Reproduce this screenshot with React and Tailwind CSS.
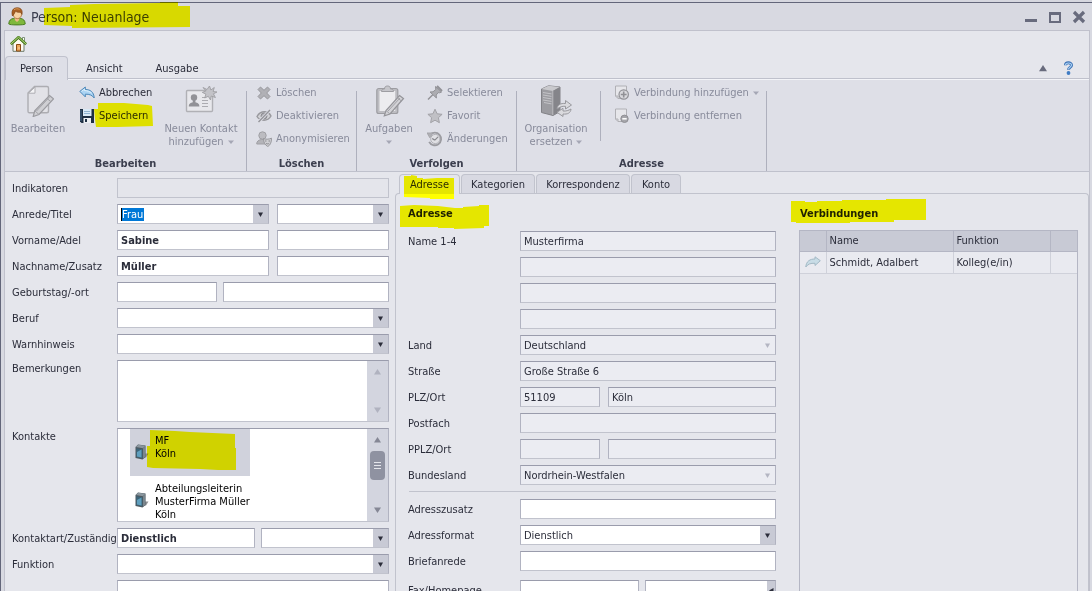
import React from "react";

const DISABLED = "text-[#888b9b]";

/* ---------- shared pieces ---------- */

function Marker({ className, w, h, points }) {
  return (
    <svg
      aria-hidden="true"
      className={"pointer-events-none absolute mix-blend-multiply " + className}
      width={w}
      height={h}
      viewBox={`0 0 ${w} ${h}`}
    >
      <polygon points={points} fill="#ffff00" />
    </svg>
  );
}

function Caret({ color = "#2b2d3a", w = 5, h = 5 }) {
  return (
    <svg width={w} height={h} viewBox="0 0 10 10" preserveAspectRatio="none" aria-hidden="true">
      <path d="M0 1h10L5 10z" fill={color} />
    </svg>
  );
}

const EDGE = "border border-[#b1b3c1] border-t-[#9a9cac] border-b-[#c1c3cd]";

function Field({ id, label, value = "", bold, readOnly, className = "flex-1" }) {
  return (
    <input
      id={id}
      aria-label={label}
      defaultValue={value}
      readOnly={readOnly}
      className={`h-5 min-w-0 px-[3px] leading-none outline-none ${EDGE} ${
        readOnly ? "bg-[#ebecf2]" : "bg-white"
      } ${bold ? "font-bold" : ""} ${className}`}
    />
  );
}

function Combo({ id, label, value = "", disabled, selected, className = "flex-1" }) {
  return (
    <div className={`flex h-5 min-w-0 items-stretch ${EDGE} ${disabled ? "bg-[#ebecf2]" : "bg-white"} ${className}`}>
      <div className="relative flex min-w-0 flex-1 items-center">
        <select
          id={id}
          aria-label={label}
          defaultValue={value}
          className={
            selected
              ? "ml-[3px] h-[13px] appearance-none border-l border-black bg-[#0078d7] pr-px leading-[13px] text-white outline-none [field-sizing:content]"
              : "h-full w-full appearance-none bg-transparent px-[3px] outline-none"
          }
        >
          <option value={value}>{value}</option>
        </select>
      </div>
      <span
        className={`flex w-[15px] items-center justify-center ${disabled ? "" : "bg-[#c8cad5]"}`}
      >
        <Caret color={disabled ? "#b3b5c2" : "#2b2d3a"} />
      </span>
    </div>
  );
}

function Row({ id, label, children, wide, tall }) {
  return (
    <div className="flex items-start">
      <label
        htmlFor={id}
        className={`shrink-0 whitespace-nowrap leading-[13px] ${tall ? "pt-0.5" : "pt-1"} ${
          wide ? "w-28" : "w-[105px]"
        }`}
      >
        {label}
      </label>
      <div className="flex min-w-0 flex-1">{children}</div>
    </div>
  );
}

/* ---------- icons ---------- */

const UserIcon = () => (
  <svg width="18" height="19" viewBox="0 0 18 19" aria-hidden="true">
    <path d="M.8 17c0-3.500 2-5.300 5-5.600l3.200 1.400 3.200-1.400c3 .3 5 2.100 5 5.600 0 1.200-16.400 1.200-16.400 0z" fill="#7fb83c" stroke="#4b7d20" />
    <path d="M6.500 10.500h5l-.3 2.600L9 15l-2.200-1.900z" fill="#eeb986" />
    <circle cx="9.400" cy="7.400" r="4.200" fill="#f7d2a4" stroke="#a96b35" strokeWidth=".8" />
    <path d="M4.500 9C3 4 5 .8 9 .8S14.800 3 14 7.400l-1.400-2.200C10 5.600 8.500 5 7.500 4 7 6 6 7 4.500 9z" fill="#a95f23" stroke="#7e4316" strokeWidth=".7" />
    <path d="M6 2.800c1.500-1.200 4-1.400 5.500-.3" stroke="#d89a55" fill="none" />
  </svg>
);

const HomeIcon = () => (
  <svg width="17" height="16" viewBox="0 0 17 16" aria-hidden="true">
    <path d="M3 7.500v7.800h11V7.500L8.500 2.500z" fill="#fdfaf0" stroke="#6d7a6a" />
    <path d="M12.500 1.500h2v4h-2z" fill="#fff" stroke="#627a5a" strokeWidth=".8" />
    <path d="M.8 8.200L8.500 1.200l7.700 7" fill="none" stroke="#4d7d1f" strokeWidth="2.600" />
    <path d="M1.200 7.800L8.500 1.200l7.300 6.600" fill="none" stroke="#b5dd80" strokeWidth="1" />
    <path d="M6.500 15V8.500h4V15z" fill="#eda75a" stroke="#8b4a14" />
    <path d="M9 11.500v1" stroke="#fff" />
  </svg>
);

const EditIcon = () => (
  <svg width="32" height="32" viewBox="0 0 32 32" aria-hidden="true">
    <path d="M12.500 1.500H25c1 0 1.500.5 1.500 1.500v23c0 1.200-.6 1.800-1.800 1.800H7.500c-1 0-1.500-.6-1.500-1.600V8z" fill="#e2e2e7" stroke="#adadb2" strokeWidth="1.400" />
    <path d="M13 2v6.200H6.500z" fill="#f4f4f6" stroke="#adadb2" />
    <path d="M27.500 10.500l4 3.300L17 29.500l-5.800 2 1.500-5.600z" fill="#cfcfd3" stroke="#9b9ba0" strokeWidth="1.200" />
    <path d="M25 13.500l4 3.200M14.500 26l13-14M13 26l4 3.500" stroke="#a3a3a8" fill="none" />
  </svg>
);

const UndoIcon = () => (
  <svg width="16" height="14" viewBox="0 0 16 14" aria-hidden="true">
    <path d="M.8 5.400L6.300 1v2.500c5 0 8.500 2.300 8.900 8.500-2-2.800-4.700-4-8.900-3.800v2.700z" fill="#a9d3f3" stroke="#4d88b8" strokeLinejoin="round" />
    <path d="M2.500 5.400l3-2.300v1.500c3 0 5.500 1 7 2.600" fill="none" stroke="#e1f2fd" />
  </svg>
);

const SaveIcon = () => (
  <svg width="14" height="14" viewBox="0 0 14 14" aria-hidden="true">
    <path d="M0 0h14v14H1.500L0 12.500z" fill="#1e3044" />
    <path d="M3 0h8.500v7H3z" fill="#d9e9f6" />
    <path d="M4 2.500h6M4 4.500h6" stroke="#8fb4d2" />
    <path d="M3.500 9h7.500v5H3.500z" fill="#eceff3" />
    <path d="M5 10h2v3H5z" fill="#1e3044" />
    <path d="M1 1v11" stroke="#4b6d8c" />
  </svg>
);

const ContactIcon = () => (
  <svg width="32" height="32" viewBox="0 0 32 32" aria-hidden="true">
    <rect x="1.500" y="5.500" width="26" height="21" rx="1" fill="#e8e8ec" stroke="#b0b0b5" strokeWidth="1.400" />
    <circle cx="9" cy="12.500" r="3.200" fill="#929297" />
    <path d="M3.800 21.500c0-3 2-3.600 4-4.200V15h2.600v2.300c2 .6 4 1.200 4 4.200z" fill="#929297" />
    <path d="M17 12.500h3M17 15.500h6M17 18.500h6M17 21.500h6" stroke="#acacb1" />
    <path d="M24.500 1l1.400 4 3.400-2.500-1.200 4L32 7l-3.600 1.800 2 3.700-4.200-1.500-.7 4-2.200-3.700-3.600 1.700 1.200-3.900-3.600-1.700 3.800-1.500L18 2.500l4 2z" fill="#c3c3c8" stroke="#9e9ea3" strokeWidth=".9" />
  </svg>
);

const CrossIcon = () => (
  <svg width="16" height="16" viewBox="0 0 16 16" aria-hidden="true">
    <path d="M4.500 2L8 5.300 11.500 2 14 4.500 10.700 8l3.300 3.500-2.500 2.500L8 10.700 4.500 14 2 11.500 5.300 8 2 4.500z" fill="#b0b0b5" stroke="#98989d" strokeLinejoin="round" />
  </svg>
);

const EyeOffIcon = () => (
  <svg width="16" height="16" viewBox="0 0 16 16" aria-hidden="true">
    <path d="M1 8.500C3 5 6 3.800 8.500 3.800S13.500 5 15 8c-1.800 3-4.500 4.200-7 4.200S2.500 11 1 8.500z" fill="#d2d2d6" stroke="#98989d" strokeWidth="1.400" />
    <circle cx="8" cy="8" r="3" fill="#a6a6ab" stroke="#8e8e93" />
    <path d="M2.500 14L14 2" stroke="#dedfe7" strokeWidth="3" />
    <path d="M2.500 14L14 2" stroke="#949499" strokeWidth="1.400" />
  </svg>
);

const MaskIcon = () => (
  <svg width="16" height="16" viewBox="0 0 16 16" aria-hidden="true">
    <circle cx="6.500" cy="4.500" r="3.700" fill="#bcbcc1" stroke="#a0a0a5" />
    <path d="M.7 13c0-3 2-3.800 4.500-4.500h3l3 2V13z" fill="#b4b4b9" stroke="#a0a0a5" />
    <path d="M7.500 7.500c2 1 5 1 8-.3 0 4-1 6.800-3.700 8.300C9 14 7.500 11.500 7.500 7.500z" fill="#d0d0d4" stroke="#98989d" />
    <path d="M9 10h1.500M12.500 10H14M10 12.300c1 .8 2.200.8 3.200 0" stroke="#88888d" fill="none" />
  </svg>
);

const TasksIcon = () => (
  <svg width="32" height="32" viewBox="0 0 32 32" aria-hidden="true">
    <rect x="3.800" y="3.500" width="21" height="25" rx="2" fill="#bdbdc2" stroke="#9d9da2" strokeWidth="1.200" />
    <path d="M6.500 6h15.700v20H6.500z" fill="#ececef" />
    <path d="M8.500 6.500c0-2 1.500-2.500 3-2.500 0-2 1-3 3-3s3 1 3 3c1.500 0 3 .5 3 2.500z" fill="#c6c6cb" stroke="#9d9da2" />
    <path d="M26.500 10.500l4 3L17 29l-5.700 1.800L13 25.500z" fill="#d3d3d7" stroke="#949499" strokeWidth="1.200" />
    <path d="M24.500 13l4 3M15 26l12-13M13 25.500l4 3.500" stroke="#a2a2a7" fill="none" />
  </svg>
);

const PinIcon = () => (
  <svg width="16" height="16" viewBox="0 0 16 16" aria-hidden="true">
    <path d="M1 14.500L6.500 9" stroke="#929297" strokeWidth="1.500" />
    <path d="M8.500 1.500l6 5.500-1.800.8-1.500-.2-2 2.400.2 3L3 7l3-.2L8.800 4.500z" fill="#acacb1" stroke="#929297" strokeLinejoin="round" />
    <path d="M10 1l5 5" stroke="#929297" strokeWidth="2" />
  </svg>
);

const StarIcon = () => (
  <svg width="16" height="16" viewBox="0 0 16 16" aria-hidden="true">
    <path d="M8 1.200l2.100 4.600 5 .5-3.700 3.400 1 5L8 12.200l-4.400 2.500 1-5L.9 6.300l5-.5z" fill="#c0c0c5" stroke="#a2a2a7" strokeLinejoin="round" />
  </svg>
);

const HistoryIcon = () => (
  <svg width="17" height="16" viewBox="0 0 17 16" aria-hidden="true">
    <path d="M3.200 3.600A6.700 6.700 0 1 1 2.300 11" fill="none" stroke="#9b9ba0" strokeWidth="2" />
    <circle cx="8.800" cy="8" r="4.900" fill="#e0e0e4" stroke="#aeaeb3" />
    <path d="M0 1.500h6.500L3 6.800z" fill="#b0b0b5" stroke="#9b9ba0" strokeWidth=".7" />
    <path d="M8.300 9.200l3.500-3.500M5.500 7.500l2.800 1.700" stroke="#88888d" strokeWidth="1.300" />
  </svg>
);

const ServerIcon = () => (
  <svg width="32" height="32" viewBox="0 0 32 32" aria-hidden="true">
    <path d="M1.500 4L8.500.8 20 2v24.500L13 30.500 1.500 27.500z" fill="#9c9ca1" stroke="#828287" />
    <path d="M1.500 4l11.300 2L20 2 8.500.8z" fill="#c9c9cd" />
    <path d="M12.800 6v24.300l7-4V2z" fill="#85858a" />
    <path d="M3 7.500l8.500 1.400M3 10l8.500 1.400M3 12.500l8.500 1.400M3 15l8.500 1.400M4 17.500l7.500 1.400" stroke="#c4c4c8" />
    <path d="M12.800 6v24" stroke="#bcbcc0" />
    <path d="M17 24c.3-4 3.500-6 8.500-5.500V15.500l6 4.500-6 4v-2.700c-3.500-.3-5.500.7-8.500 2.700z" fill="#dadade" stroke="#98989d" strokeLinejoin="round" />
    <path d="M31 24c-.3 4-3.500 5.500-8 5v2.500l-6-4.200 6-4V26c3 .3 5.500-.5 8-2z" fill="#dadade" stroke="#98989d" strokeLinejoin="round" />
  </svg>
);

const PageIcon = ({ minus }) => (
  <svg width="16" height="16" viewBox="0 0 16 16" aria-hidden="true">
    <path d="M1.500 1h11v12.500H4L1.500 11z" fill="#e6e6ea" stroke="#b0b0b5" />
    <path d="M1.500 11H4v2.500" fill="none" stroke="#b0b0b5" />
    {minus ? (
      <>
        <circle cx="10.500" cy="10.800" r="3.700" fill="#a6a6ab" stroke="#909095" />
        <path d="M8.300 10.800h4.400" stroke="#fff" strokeWidth="1.500" />
      </>
    ) : (
      <>
        <circle cx="9.700" cy="9.500" r="4.700" fill="#d9d9dd" stroke="#909095" strokeWidth="1.200" />
        <path d="M6.800 9.500h5.800M9.700 6.600v5.800" stroke="#909095" strokeWidth="1.600" />
      </>
    )}
  </svg>
);

const CompanyIcon = () => (
  <svg width="14" height="16" viewBox="0 0 14 16" aria-hidden="true">
    <path d="M9 9.500h4.500L11 13.500H8z" fill="#8f9093" />
    <path d="M.5 3L3 .5l7.500 1v11.500L7.500 15.500l-7-1.500z" fill="#4d5960" />
    <path d="M.8 3L3.200.8l7.300 1L8 4.200z" fill="#8b979f" />
    <path d="M1.300 4.200l6 1v9l-6-1.200z" fill="#3d6478" />
    <path d="M2 8l4.500-2.500v8L2 12.600z" fill="#5f9fbe" />
    <path d="M8 4.200l2.300-2v10.500L8 14.800z" fill="#7b868d" />
  </svg>
);

const LinkArrow = () => (
  <svg width="16" height="12" viewBox="0 0 16 12" aria-hidden="true">
    <path d="M15.300 4.700L10 .8V3C5 3 1.300 5 .8 11c2.200-3 4.700-3.900 9.200-3.700v2.200z" fill="#c8dce6" stroke="#a3b9c5" strokeLinejoin="round" />
  </svg>
);

/* ---------- ribbon ---------- */

function Big({ icon, lines, caret, className = "" }) {
  return (
    <button type="button" className={`flex flex-col items-center pt-[5px] leading-[13px] ${DISABLED} ${className}`}>
      {icon}
      <span className="mt-[5px] whitespace-nowrap">{lines[0]}</span>
      {(lines[1] || caret) && (
        <span className="flex h-[13px] items-center gap-1 whitespace-nowrap">
          {lines[1]}
          {caret && <Caret color="#a5a7b5" w={6} h={4} />}
        </span>
      )}
    </button>
  );
}

function Small({ icon, children, enabled, caret, marker }) {
  return (
    <button
      type="button"
      className={`relative flex h-[23px] items-center gap-1 whitespace-nowrap ${enabled ? "text-[#2b2d3a]" : DISABLED}`}
    >
      <span className="flex w-4 justify-center">{icon}</span>
      <span>{children}</span>
      {caret && <Caret color="#a5a7b5" w={6} h={4} />}
      {marker}
    </button>
  );
}

function Group({ title, className, children }) {
  return (
    <section className={`flex h-[91px] flex-col justify-between ${className}`}>
      <div className="flex items-start">{children}</div>
      <h2 className="pb-px text-center font-bold leading-[13px] text-[#3b3e4e]">{title}</h2>
    </section>
  );
}

const Divider = () => <div className="h-20 w-px self-end bg-[#aeb0bd]" />;

function Ribbon() {
  return (
    <div className="flex border-y border-b-[#bfc1cc] border-t-[#f3f4f8] bg-[#dedfe7]">
      <Group title="Bearbeiten" className="w-[241px]">
        <Big className="ml-[7px] w-[52px]" icon={<EditIcon />} lines={["Bearbeiten"]} />
        <div className="ml-[15px] w-[85px] pt-px">
          <Small enabled icon={<UndoIcon />}>Abbrechen</Small>
          <Small
            enabled
            icon={<SaveIcon />}
            marker={
              <Marker
                className="left-[15px] -top-px"
                w={60}
                h={25}
                points="4,0 30,0 54,2 58,3 59,23 23,24 2,24 1,16 0,6 4,6"
              />
            }
          >
            Speichern
          </Small>
        </div>
        <Big className="w-[74px]" icon={<ContactIcon />} lines={["Neuen Kontakt", "hinzufügen"]} caret />
      </Group>
      <Divider />
      <Group title="Löschen" className="w-[109px]">
        <div className="ml-[9px] pt-px">
          <Small icon={<CrossIcon />}>Löschen</Small>
          <Small icon={<EyeOffIcon />}>Deaktivieren</Small>
          <Small icon={<MaskIcon />}>Anonymisieren</Small>
        </div>
      </Group>
      <Divider />
      <Group title="Verfolgen" className="w-[159px]">
        <Big className="ml-2 w-12" icon={<TasksIcon />} lines={["Aufgaben"]} caret />
        <div className="ml-[14px] pt-px">
          <Small icon={<PinIcon />}>Selektieren</Small>
          <Small icon={<StarIcon />}>Favorit</Small>
          <Small icon={<HistoryIcon />}>Änderungen</Small>
        </div>
      </Group>
      <Divider />
      <Group title="Adresse" className="w-[249px]">
        <Big className="ml-2 w-[62px]" icon={<ServerIcon />} lines={["Organisation", "ersetzen"]} caret />
        <div className="ml-[13px] mt-[11px] h-[50px] w-px bg-[#aeb0bd]" />
        <div className="ml-[13px] pt-px">
          <Small icon={<PageIcon />} caret>Verbindung hinzufügen</Small>
          <Small icon={<PageIcon minus />}>Verbindung entfernen</Small>
        </div>
      </Group>
      <Divider />
    </div>
  );
}

/* ---------- left form ---------- */

function ScrollTrack({ thumb }) {
  const c = thumb ? "#858795" : "#b0b2bf";
  return (
    <div className="flex w-[21px] shrink-0 flex-col items-center justify-between bg-[#d3d5df] py-2">
      <span className="rotate-180"><Caret color={c} w={7} h={6} /></span>
      {thumb && (
        <span className="mb-5 flex h-[29px] w-[15px] flex-col items-center justify-center gap-px rounded-sm bg-[#8f92a1]">
          <i className="h-px w-[7px] bg-[#e5e6ec]" />
          <i className="mt-px h-px w-[7px] bg-[#e5e6ec]" />
          <i className="mt-px h-px w-[7px] bg-[#e5e6ec]" />
        </span>
      )}
      <Caret color={c} w={7} h={6} />
    </div>
  );
}

function PersonForm() {
  return (
    <form className="flex w-96 shrink-0 flex-col gap-1.5 pl-[7px] pt-1.5">
      <Row id="ind" label="Indikatoren">
        <input
          id="ind"
          readOnly
          className="h-5 min-w-0 flex-1 border border-[#c1c3cd] bg-[#e4e5eb] outline-none"
        />
      </Row>
      <Row id="anrede" label="Anrede/Titel">
        <Combo id="anrede" value="Frau" selected className="w-[152px]" />
        <Combo label="Titel" className="ml-2 flex-1" />
      </Row>
      <Row id="vorname" label="Vorname/Adel">
        <Field id="vorname" value="Sabine" bold className="w-[152px]" />
        <Field label="Adel" className="ml-2 flex-1" />
      </Row>
      <Row id="nachname" label="Nachname/Zusatz">
        <Field id="nachname" value="Müller" bold className="w-[152px]" />
        <Field label="Zusatz" className="ml-2 flex-1" />
      </Row>
      <Row id="geb" label="Geburtstag/-ort">
        <Field id="geb" className="w-[100px]" />
        <Field label="Geburtsort" className="ml-1.5 flex-1" />
      </Row>
      <Row id="beruf" label="Beruf"><Combo id="beruf" /></Row>
      <Row id="warn" label="Warnhinweis"><Combo id="warn" /></Row>
      <Row id="bem" label="Bemerkungen" tall>
        <div className={`flex h-[62px] flex-1 bg-white ${EDGE}`}>
          <textarea id="bem" className="min-w-0 flex-1 resize-none px-[3px] outline-none" />
          <ScrollTrack />
        </div>
      </Row>
      <Row id="kontakte" label="Kontakte" tall>
        <div id="kontakte" className={`flex h-[94px] flex-1 overflow-hidden bg-white ${EDGE}`}>
          <ul className="flex-1 pl-3 leading-[13px] text-black">
            <li className="relative flex h-[47px] w-[120px] items-start bg-[#d0d2dc]">
              <span className="ml-[5px] mt-[15px]"><CompanyIcon /></span>
              <span className="ml-1.5 mt-[5px]">MF<br />Köln</span>
              <Marker
                className="left-[17px] top-px"
                w={89}
                h={41}
                points="3,0 28,1 43,2 88,4 88,18 89,18 89,40 71,40 53,39 6,38 0,37 0,16 3,16"
              />
            </li>
            <li className="flex items-start whitespace-nowrap">
              <span className="ml-[5px] mt-4"><CompanyIcon /></span>
              <span className="ml-1.5 mt-1.5">Abteilungsleiterin<br />MusterFirma Müller<br />Köln</span>
            </li>
          </ul>
          <ScrollTrack thumb />
        </div>
      </Row>
      <Row id="kart" label="Kontaktart/Zuständig">
        <Field id="kart" value="Dienstlich" bold className="w-[138px]" />
        <Combo label="Zuständig" className="ml-1.5 flex-1" />
      </Row>
      <Row id="funktion" label="Funktion"><Combo id="funktion" /></Row>
      <Row id="zus" label=""><Field id="zus" label="Funktion Zusatz" /></Row>
    </form>
  );
}

/* ---------- right panel ---------- */

function AddressForm() {
  return (
    <form className="flex min-w-0 flex-[368] flex-col">
      <h2 className="relative mb-[11px] font-bold leading-[13px] text-[#1f212c]">
        Adresse
        <Marker
          className="-left-2 -top-0.5"
          w={89}
          h={24}
          points="0,1 14,0 38,1 55,3 63,3 63,2 79,1 79,0 89,0 89,21 84,21 84,23 54,24 54,23 38,23 38,22 23,22 0,22"
        />
      </h2>
      <div className="flex flex-col gap-1.5">
        <Row wide id="name1" label="Name 1-4"><Field id="name1" value="Musterfirma" readOnly /></Row>
        <Row wide id="name2" label=""><Field id="name2" label="Name 2" readOnly /></Row>
        <Row wide id="name3" label=""><Field id="name3" label="Name 3" readOnly /></Row>
        <Row wide id="name4" label=""><Field id="name4" label="Name 4" readOnly /></Row>
        <Row wide id="land" label="Land"><Combo id="land" value="Deutschland" disabled /></Row>
        <Row wide id="str" label="Straße"><Field id="str" value="Große Straße 6" readOnly /></Row>
        <Row wide id="plz" label="PLZ/Ort">
          <Field id="plz" value="51109" readOnly className="w-20" />
          <Field label="Ort" value="Köln" readOnly className="ml-2 flex-1" />
        </Row>
        <Row wide id="pf" label="Postfach"><Field id="pf" readOnly /></Row>
        <Row wide id="pplz" label="PPLZ/Ort">
          <Field id="pplz" readOnly className="w-20" />
          <Field label="Postfach Ort" readOnly className="ml-2 flex-1" />
        </Row>
        <Row wide id="bl" label="Bundesland"><Combo id="bl" value="Nordrhein-Westfalen" disabled /></Row>
      </div>
      <hr className="my-1.5 ml-px h-0.5 border-t border-[#c1c3cd]" />
      <div className="flex flex-col gap-1.5">
        <Row wide id="az" label="Adresszusatz"><Field id="az" /></Row>
        <Row wide id="af" label="Adressformat"><Combo id="af" value="Dienstlich" /></Row>
        <Row wide id="ba" label="Briefanrede"><Field id="ba" /></Row>
      </div>
      <div className="mt-[9px]">
        <Row wide id="fax" label="Fax/Homepage">
          <Field id="fax" className="w-[119px]" />
          <div className={`ml-1.5 flex h-5 min-w-0 flex-1 bg-white ${EDGE}`}>
            <input aria-label="Homepage" className="min-w-0 flex-1 px-[3px] outline-none" />
            <button type="button" aria-label="Öffnen" className="flex w-2 items-center justify-center bg-[#c8cad5]">
              <span className="rotate-90"><Caret /></span>
            </button>
          </div>
        </Row>
      </div>
    </form>
  );
}

function Connections() {
  return (
    <section className="flex min-w-0 flex-[279] flex-col">
      <h2 className="relative mb-2.5 pl-px font-bold leading-[13px] text-[#1f212c]">
        Verbindungen
        <Marker
          className="-left-2 -top-2"
          w={135}
          h={25}
          points="0,2 14,2 14,3 26,3 26,2 51,2 51,1 95,1 95,0 135,0 135,21 103,21 103,23 59,23 59,24 5,24 5,23 0,23"
        />
      </h2>
      <div className="flex-1 border border-[#b4b6c4]">
        <table className="w-full table-fixed border-collapse text-left leading-[13px]">
          <colgroup>
            <col className="w-[26px]" />
            <col />
            <col className="w-[97px]" />
            <col className="w-[27px]" />
          </colgroup>
          <thead>
            <tr className="h-5 border-b border-[#b4b6c4] bg-[#c8cad5]">
              <th className="border-r border-[#b4b6c4]" />
              <th className="border-r border-[#b4b6c4] pl-[3px] font-normal">Name</th>
              <th className="border-r border-[#b4b6c4] pl-[3px] font-normal">Funktion</th>
              <th />
            </tr>
          </thead>
          <tbody>
            <tr className="h-[22px] border-b border-[#cfd1da] bg-[#e9eaf0]">
              <td className="border-r border-[#cfd1da] pl-[5px]"><LinkArrow /></td>
              <td className="border-r border-[#cfd1da] pl-[3px]">Schmidt, Adalbert</td>
              <td className="border-r border-[#cfd1da] pl-[3px]">Kolleg(e/in)</td>
              <td />
            </tr>
          </tbody>
        </table>
      </div>
    </section>
  );
}

function DetailPanel() {
  const tab = "h-[19px] rounded-t-sm border border-b-0 border-[#c1c3cd] bg-[#d8d9e2] leading-[17px]";
  return (
    <div className="ml-1.5 flex min-w-0 flex-1 flex-col pt-0.5">
      <nav className="relative z-10 flex gap-px pl-1">
        <button type="button" className="relative -mb-px h-5 w-[61px] rounded-t-sm border border-b-0 border-[#c1c3cd] bg-[#e5e6ec] pb-px leading-[17px]">
          Adresse
          <Marker
            className="left-1 top-0"
            w={51}
            h={25}
            points="0,1 7,1 7,0 13,1 13,3 19,3 19,4 33,3 50,3 50,24 26,24 26,23 0,22"
          />
        </button>
        <button type="button" className={`${tab} w-[74px]`}>Kategorien</button>
        <button type="button" className={`${tab} w-[94px]`}>Korrespondenz</button>
        <button type="button" className={`${tab} w-[50px]`}>Konto</button>
      </nav>
      <div className="flex flex-1 gap-[23px] rounded-t-sm border border-b-0 border-[#c1c3cd] pl-3 pr-2.5 pt-[13px]">
        <AddressForm />
        <Connections />
      </div>
    </div>
  );
}

/* ---------- window ---------- */

export default function App() {
  return (
    <div className="flex h-screen flex-col overflow-hidden bg-[#d6d7df] pt-0.5 font-['DejaVu_Sans_Condensed','DejaVu_Sans',sans-serif] text-[11px] leading-[13px] text-[#2b2d3a]">
      <div className="flex min-h-0 flex-1 flex-col border-l border-t border-[#63667a] bg-[#d8d9e1] pl-[3px] pr-0.5">
        <header className="flex h-[27px] shrink-0 items-center pl-1 pr-1">
          <UserIcon />
          <h1 className="relative ml-[5px] text-[14px] leading-[18px] text-[#3b3e4e]">
            Person: Neuanlage
            <Marker
              className="left-[13px] -top-1.5"
              w={146}
              h={26}
              points="0,6 26,5 26,3 50,2 116,1 116,0 134,0 134,4 146,4 146,25 28,26 28,24 0,23"
            />
          </h1>
          <div className="ml-auto flex items-center gap-2.5">
            <button type="button" aria-label="Minimieren">
              <svg width="14" height="14" viewBox="0 0 14 14"><path d="M1 10.500h12" stroke="#686b7d" strokeWidth="3" /></svg>
            </button>
            <button type="button" aria-label="Maximieren">
              <svg width="14" height="14" viewBox="0 0 14 14"><path d="M2 4h10v8H2z" fill="none" stroke="#686b7d" strokeWidth="2" /><path d="M1 3.500h12" stroke="#686b7d" strokeWidth="3" /></svg>
            </button>
            <button type="button" aria-label="Schließen">
              <svg width="14" height="14" viewBox="0 0 14 14"><path d="M2 2l10 10M12 2L2 12" stroke="#686b7d" strokeWidth="3.200" /></svg>
            </button>
          </div>
        </header>

        <main className="flex min-h-0 flex-1 flex-col border border-b-0 border-[#c0c1cc] bg-[#e5e6ec]">
          <div className="flex h-[25px] shrink-0 items-center pl-[5px]">
            <button type="button" aria-label="Startseite"><HomeIcon /></button>
          </div>
          <nav className="relative z-10 flex h-[23px] shrink-0 items-end border-b border-[#bfc1cc]">
            <button type="button" className="-mb-0.5 h-6 w-[63px] rounded-t-sm border border-b-0 border-[#c0c2cd] bg-[#dedfe7]">Person</button>
            <button type="button" className="ml-[18px] h-[22px] pt-0.5">Ansicht</button>
            <button type="button" className="ml-[33px] h-[22px] pt-0.5">Ausgabe</button>
            <div className="ml-auto flex h-[22px] items-center gap-4 pr-[15px] pt-0.5">
              <button type="button" aria-label="Menüband minimieren" className="rotate-180">
                <Caret color="#686b7d" w={8} h={7} />
              </button>
              <button type="button" aria-label="Hilfe">
                <svg width="11" height="14" viewBox="0 0 11 14">
                  <path d="M2.500 4.300C2.500 1 8.500 1 8.500 4.200c0 2.200-3 2.200-3 4.600" fill="none" stroke="#3d72b5" strokeWidth="3" />
                  <path d="M2.500 4.200C2.500 1.400 8.500 1.200 8.500 4.100c0 2-3 2.200-3 4.200" fill="none" stroke="#a9d0f4" strokeWidth="1.200" />
                  <circle cx="5.500" cy="12" r="1.900" fill="#3f7cc4" />
                </svg>
              </button>
            </div>
          </nav>
          <Ribbon />
          <div className="flex min-h-0 flex-1">
            <PersonForm />
            <DetailPanel />
          </div>
        </main>
      </div>
    </div>
  );
}
